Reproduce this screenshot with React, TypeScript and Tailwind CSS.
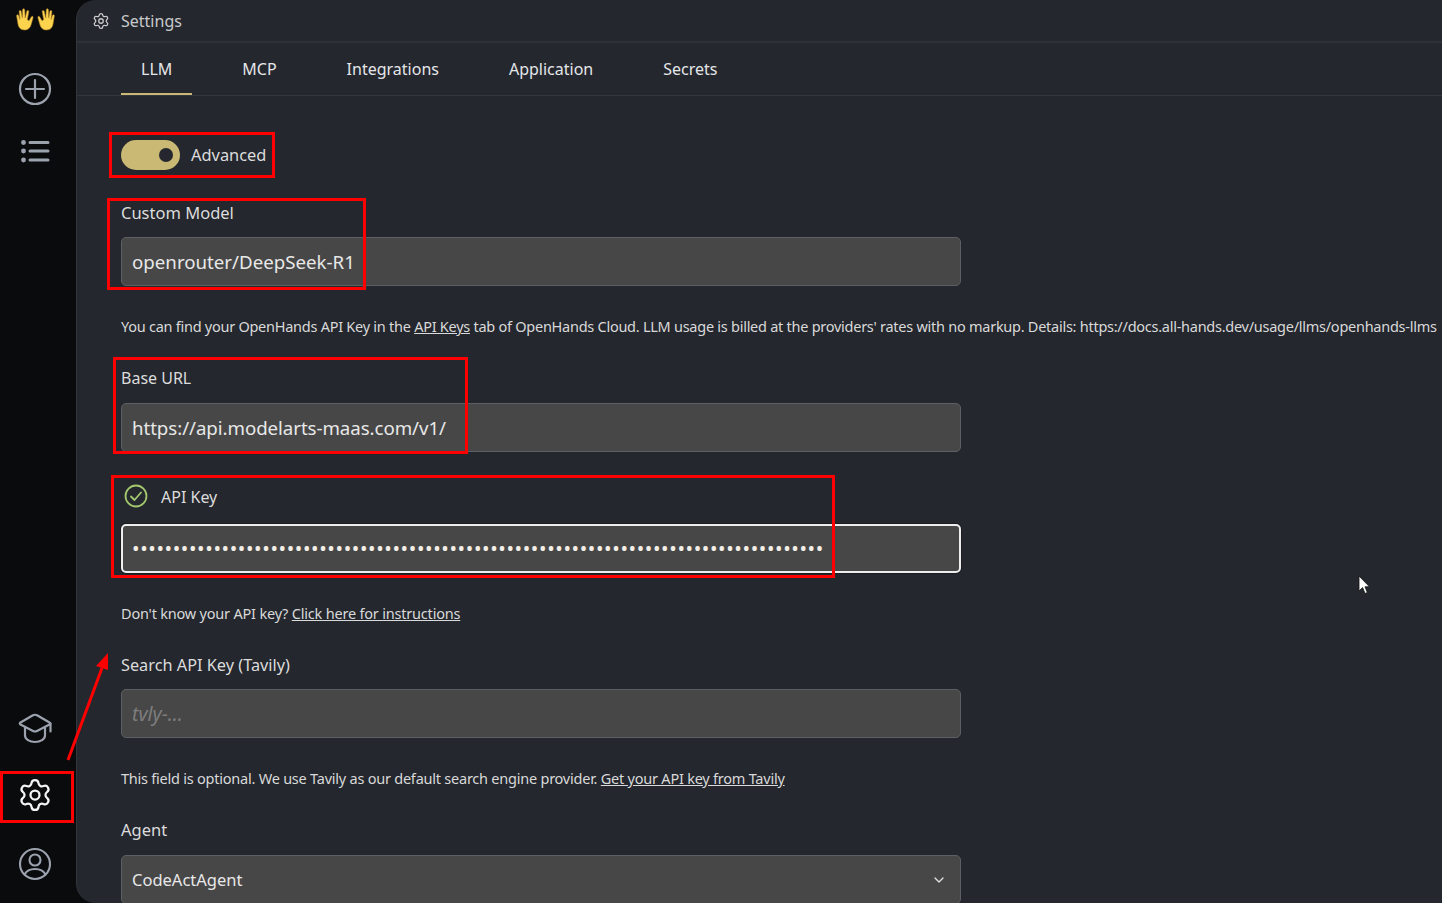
import { Settings, ChevronDown } from "lucide-react";

const font = { fontFamily: '"Noto Sans", sans-serif' };
const helpText = "h-[22px] whitespace-nowrap text-[14.5px] leading-[22px] text-[#d9d9d9]";

function Field({ value, size = "text-[18.7px]", muted = false, focus = false, chevron = false, extra = "" }: { value: string; size?: string; muted?: boolean; focus?: boolean; chevron?: boolean; extra?: string }) {
  return (
    <div className={`flex h-[49px] w-[840px] shrink-0 items-center justify-between rounded-[5px] bg-[#474747] pr-[13px] ${focus ? "border-2 border-[#eeeeee] pl-[9px] shadow-[0_0_0_1px_#1a1c20]" : "border border-[#5c5f63] pl-[10px]"} ${muted ? "italic text-[#7d7d7d]" : "text-[#e8e8e8]"} ${size}`}>
      <span className={`whitespace-nowrap ${extra}`}>{value}</span>
      {chevron && <ChevronDown size={16} className="text-[#e0e0e0]" />}
    </div>
  );
}

function Red({ className }: { className: string }) {
  return <div className={`pointer-events-none absolute border-[3px] border-[#fe0000] ${className}`} />;
}

function Hand({ flip = false }: { flip?: boolean }) {
  return (
    <svg width="20" height="23" viewBox="0 0 20 24" style={flip ? { transform: "scaleX(-1)" } : undefined}>
      <path
        d="M17.500 9.500c.8-1.400 2.300-.9 2 .6l-2 7c-.8 3.600-3.400 5.900-7 5.900-4.200 0-6.300-2.700-6.800-6.200L2.300 8.300c-.2-1.500 1.700-1.900 2.100-.4L5.700 12 4.900 3.900c-.2-1.600 1.900-1.900 2.200-.3L8.200 10.500 8.500 2c0-1.700 2.200-1.700 2.300 0l.4 8.500L12.900 3.500c.4-1.600 2.400-1.200 2.100.4L13.500 12.200l1.700 1.200z"
        fill="#fcd34d"
        stroke="#a87c2a"
        strokeWidth="0.6"
      />
    </svg>
  );
}

function PlusIcon() {
  return (
    <svg width="36" height="36" viewBox="0 0 36 36" fill="none" stroke="#9ca3af" strokeWidth="2.2" strokeLinecap="round" className="mt-[39px]">
      <circle cx="18" cy="18" r="15" />
      <path d="M18 9v18M9 18h18" />
    </svg>
  );
}

function ListIcon() {
  return (
    <svg width="36" height="36" viewBox="0 0 36 36" className="mt-[26px]">
      <g fill="#9ca3af">
        <circle cx="6.500" cy="9.500" r="2.400" />
        <circle cx="6.500" cy="18" r="2.400" />
        <circle cx="6.500" cy="27" r="2.400" />
      </g>
      <path d="M13 9.500h18M13 18h18M13 27h18" stroke="#9ca3af" strokeWidth="3" strokeLinecap="round" />
    </svg>
  );
}

function CapIcon() {
  return (
    <svg width="36" height="36" viewBox="0 0 36 36" fill="none" stroke="#9ca3af" strokeWidth="2.200" strokeLinecap="round" strokeLinejoin="round" className="mb-[31px]">
      <path d="M15.500 5.500Q18 4 20.500 5.500L32.500 12.500Q34 13.500 32.500 14.500L20 21Q18 22 16 21L3.500 14.500Q2 13.500 3.500 12.500Z" />
      <path d="M8 17.500v8c0 3.500 4.500 6.500 10 6.500s10-3 10-6.500v-8" />
      <path d="M33.500 13.500v8" />
    </svg>
  );
}

function UserIcon() {
  return (
    <svg width="36" height="36" viewBox="0 0 36 36" fill="none" stroke="#9ca3af" strokeWidth="2.100" strokeLinecap="round" className="mb-[21px]">
      <circle cx="18" cy="18" r="15" />
      <circle cx="18" cy="14" r="5.500" />
      <path d="M7.500 28.500c2-4 6-5.500 10.500-5.500s8.500 1.500 10.500 5.500" />
    </svg>
  );
}

function CheckIcon() {
  return (
    <svg width="24" height="24" viewBox="0 0 24 24" fill="none" stroke="#a3c76d" strokeWidth="1.800" strokeLinecap="round" strokeLinejoin="round" className="ml-[3px]">
      <circle cx="12" cy="12" r="10.500" />
      <path d="M7 12.500l3.500 3.500L17 8.500" />
    </svg>
  );
}

export default function App() {
  return (
    <div style={font} className="relative flex h-[903px] w-[1442px] overflow-hidden bg-[#0a0b0c] text-[#dcdcdc]">
      <aside className="flex w-[76px] shrink-0 flex-col items-center pr-[6px]">
        <div className="mt-[8px] flex h-[24px] items-start gap-[3px]">
          <Hand />
          <Hand flip />
        </div>
        <PlusIcon />
        <ListIcon />
        <div className="flex-1" />
        <CapIcon />
        <Settings size={36} strokeWidth={1.500} className="mb-[33px] text-[#f4f4f4]" />
        <UserIcon />
      </aside>

      <main className="flex h-[903px] w-[1366px] flex-col overflow-hidden rounded-l-[20px] border-l border-[#33363c] bg-[#24272e]">
        <header className="flex h-[43px] shrink-0 items-center gap-[11px] border-b-2 border-[#2e3138] pl-[15px] text-[16px] text-[#c9cacc]">
          <Settings size={18} strokeWidth={1.700} />
          <span>Settings</span>
        </header>
        <nav className="flex h-[53px] shrink-0 gap-[30px] border-b border-[#33363c] pl-[44px] text-[16px] text-[#e4e6ea]">
          {["LLM", "MCP", "Integrations", "Application", "Secrets"].map((t, i) => (
            <div key={t} className={`flex items-center border-b-2 px-[20px] pt-[2px] ${i === 0 ? "border-[#c9b974]" : "border-transparent"}`}>{t}</div>
          ))}
        </nav>

        <div className="flex flex-col pl-[44px] pt-[44px]">
          <div className="flex h-[30px] items-center gap-[11px] text-[16.400px] text-[#dcdcdc]">
            <div className="flex h-[30px] w-[59px] items-center justify-end rounded-full bg-[#c9b974] pr-[7px]">
              <div className="h-[14px] w-[14px] rounded-full bg-[#24272e]" />
            </div>
            Advanced
          </div>

          <div className="mt-[31px] h-[36px] text-[16.500px] leading-[24px]">Custom Model</div>
          <Field value="openrouter/DeepSeek-R1" extra="pt-[1px]" />
          <p className={`mt-[29px] tracking-[-0.26px] ${helpText}`}>
            You can find your OpenHands API Key in the <span className="underline">API Keys</span> tab of OpenHands Cloud. LLM usage is billed at the providers' rates with no markup. Details: https://docs.all-hands.dev/usage/llms/openhands-llms
          </p>

          <div className="mt-[29px] h-[37px] text-[16px] leading-[24px]">Base URL</div>
          <Field value="https://api.modelarts-maas.com/v1/" extra="pt-[1px] tracking-[-0.06px]" />

          <div className="mt-[32px] flex h-[40px] items-start gap-[13px] text-[16px] leading-[26px]">
            <CheckIcon />
            API Key
          </div>
          <Field value={"•".repeat(85)} size="text-[20px]" focus extra="tracking-[0.62px] text-[#f4efe6]" />

          <p className={`mt-[29px] tracking-[-0.2px] ${helpText}`}>
            Don't know your API key? <span className="underline">Click here for instructions</span>
          </p>
          <div className="mt-[29px] h-[36px] text-[16.300px] leading-[24px]">Search API Key (Tavily)</div>
          <Field value="tvly-..." size="text-[19.500px]" muted extra="pt-[1px]" />
          <p className={`mt-[29px] tracking-[-0.23px] ${helpText}`}>
            This field is optional. We use Tavily as our default search engine provider. <span className="underline">Get your API key from Tavily</span>
          </p>
          <div className="mt-[29px] h-[37px] text-[16.500px] leading-[24px]">Agent</div>
          <Field value="CodeActAgent" size="text-[16.500px]" chevron extra="pt-[1px]" />
        </div>
      </main>

      <Red className="left-[109px] top-[132px] h-[46px] w-[166px]" />
      <Red className="left-[107px] top-[198px] h-[92px] w-[259px]" />
      <Red className="left-[113px] top-[357px] h-[97px] w-[355px]" />
      <Red className="left-[111px] top-[475px] h-[103px] w-[724px]" />
      <Red className="left-0 top-[771px] h-[52px] w-[74px]" />

      <svg className="pointer-events-none absolute left-[60px] top-[648px]" width="56" height="116" viewBox="0 0 56 116" fill="none">
        <path d="M8 112 L42 20" stroke="#fe0000" strokeWidth="3" />
        <path d="M48 5 L48 22 L36 18 Z" fill="#fe0000" />
      </svg>
      <svg className="pointer-events-none absolute left-[1358px] top-[575px]" width="12" height="20" viewBox="0 0 12 20">
        <path d="M1 1 V16 L4.600 12.600 L7 18.500 L9.400 17.500 L7 11.800 H11.500 Z" fill="#fff" stroke="#111" strokeWidth="0.8" />
      </svg>
    </div>
  );
}
